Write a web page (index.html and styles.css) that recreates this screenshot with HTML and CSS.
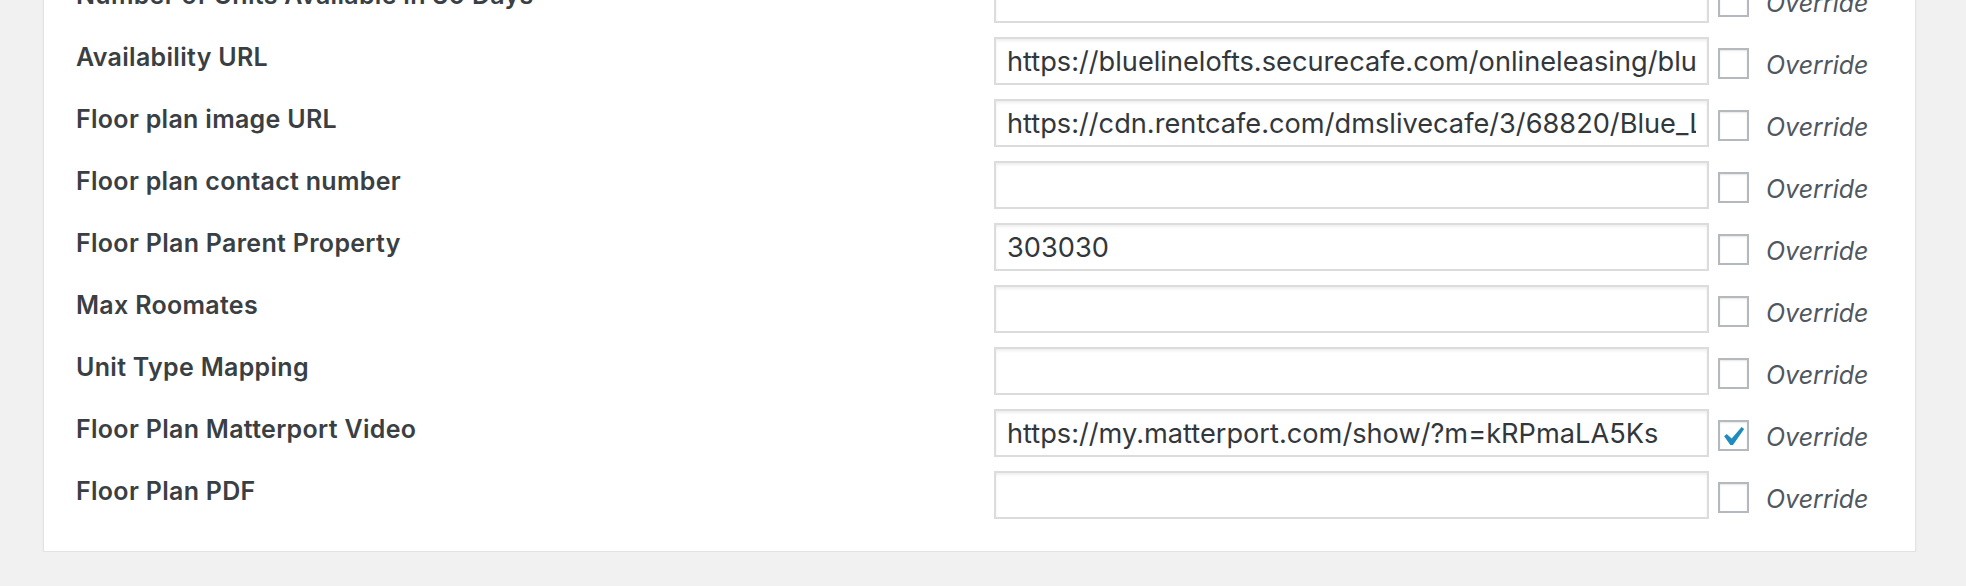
FILE: index.html
```html
<!DOCTYPE html>
<html lang="en">
<head>
<meta charset="utf-8">
<title>Floor plan fields</title>
<link rel="stylesheet" href="styles.css">
</head>
<body>
<div class="page">
  <div class="card">
    <div class="row">
      <div class="label">Number of Units Available in 30 Days</div>
      <input class="field" type="text" value="">
      <span class="box"></span>
      <span class="override">Override</span>
    </div>
    <div class="row">
      <div class="label">Availability URL</div>
      <input class="field" type="text" value="https://bluelinelofts.securecafe.com/onlineleasing/blue-line-lofts/oleapplication.aspx">
      <span class="box"></span>
      <span class="override">Override</span>
    </div>
    <div class="row">
      <div class="label">Floor plan image URL</div>
      <input class="field" type="text" value="https://cdn.rentcafe.com/dmslivecafe/3/68820/Blue_Line_Lofts_A1.jpg">
      <span class="box"></span>
      <span class="override">Override</span>
    </div>
    <div class="row">
      <div class="label">Floor plan contact number</div>
      <input class="field" type="text" value="">
      <span class="box"></span>
      <span class="override">Override</span>
    </div>
    <div class="row">
      <div class="label">Floor Plan Parent Property</div>
      <input class="field" type="text" value="303030">
      <span class="box"></span>
      <span class="override">Override</span>
    </div>
    <div class="row">
      <div class="label">Max Roomates</div>
      <input class="field" type="text" value="">
      <span class="box"></span>
      <span class="override">Override</span>
    </div>
    <div class="row">
      <div class="label">Unit Type Mapping</div>
      <input class="field" type="text" value="">
      <span class="box"></span>
      <span class="override">Override</span>
    </div>
    <div class="row">
      <div class="label">Floor Plan Matterport Video</div>
      <input class="field" type="text" value="https://my.matterport.com/show/?m=kRPmaLA5Ks">
      <span class="box checked"><svg class="tick" viewBox="5.2 4.4 11.4 10.2" width="22" height="20"><path d="M14.83 4.89l1.34.94-5.81 8.38H9.02L5.78 9.67l1.34-1.25 2.57 2.4z" fill="#1e8cbe"/></svg></span>
      <span class="override">Override</span>
    </div>
    <div class="row">
      <div class="label">Floor Plan PDF</div>
      <input class="field" type="text" value="">
      <span class="box"></span>
      <span class="override">Override</span>
    </div>
  </div>
</div>
</body>
</html>
```
FILE: styles.css
```css
html, body {
  margin: 0;
  padding: 0;
  background: #f1f1f1;
}

body {
  font-family: Inter, "Liberation Sans", Arial, sans-serif;
  overflow: hidden;
}

.page {
  padding: 0 50px 0 43px;
}

.card {
  margin-top: -33px;
  background: #fff;
  border: 1px solid #e3e3e3;
  box-shadow: 0 1px 2px rgba(0, 0, 0, 0.06);
  padding: 0 0 25px 32px;
}

.row {
  display: grid;
  grid-template-columns: 909px 715px 31px auto;
  column-gap: 9px;
  align-items: start;
  padding: 7px 0;
}

.label {
  padding-top: 5px;
  font-size: 25px;
  line-height: 30px;
  font-weight: 600;
  letter-spacing: 0.3px;
  color: #3a3f44;
}

.field {
  box-sizing: border-box;
  height: 48px;
  width: 715px;
  margin: 0;
  padding: 0 11px;
  border: 2px solid #dcdcdc;
  box-shadow: inset 0 2px 3px rgba(0, 0, 0, 0.07);
  background: #fff;
  font-family: Inter, "Liberation Sans", Arial, sans-serif;
  font-size: 27.2px;
  color: #32373c;
  outline: none;
}

.box {
  box-sizing: border-box;
  width: 31px;
  height: 31px;
  margin-top: 11px;
  border: 2px solid #b4b9be;
  background: #fff;
  box-shadow: inset 0 1px 2px rgba(0, 0, 0, 0.1);
  display: flex;
  align-items: center;
  justify-content: center;
}

.tick {
  margin-top: 1px;
}

.override {
  margin-left: 8px;
  padding-top: 13px;
  font-size: 25px;
  line-height: 30px;
  font-style: italic;
  color: #50575e;
}
```
